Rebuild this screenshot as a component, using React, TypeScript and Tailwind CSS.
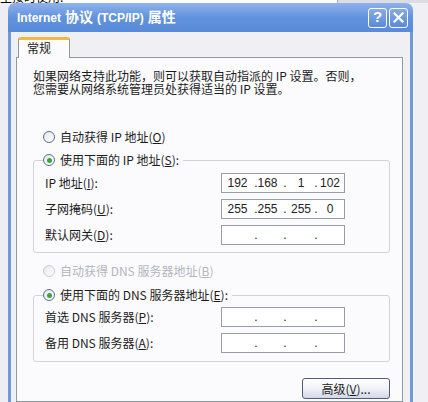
import React from "react";

const cjk = "font-['Noto_Sans_CJK_SC',sans-serif]";

function Radio({ checked = false, disabled = false }: { checked?: boolean; disabled?: boolean }) {
  return (
    <span
      className={`flex items-center justify-center w-[12px] h-[12px] rounded-full border bg-gradient-to-br from-[#e4e6ee] to-white ${
        disabled ? "border-[#c9ccd6]" : "border-[#5d6f8c]"
      }`}
    >
      {checked && <span className="w-[5px] h-[5px] rounded-full bg-[#3aa53a]" />}
    </span>
  );
}

function Key({ k }: { k: string }) {
  return (
    <>
      (<span className="underline underline-offset-1">{k}</span>)
    </>
  );
}

// IP 地址输入框：四段加三个点
function IpBox({ parts }: { parts?: string[] }) {
  const p = parts ?? ["", "", "", ""];
  return (
    <div className="w-[124px] h-[20px] border border-[#979eab] bg-white flex items-center font-['Liberation_Sans',sans-serif] text-[12px] text-[#222]">
      <span className="w-[31px] flex justify-center">{p[0]}</span>
      <span className="w-[6px] flex justify-center">.</span>
      <span className="w-[17px] flex justify-center">{p[1]}</span>
      <span className="w-[18px] flex justify-center">.</span>
      <span className="w-[14px] flex justify-center">{p[2]}</span>
      <span className="w-[16px] flex justify-center">.</span>
      <span className="w-[12px] flex justify-center">{p[3]}</span>
    </div>
  );
}

function Row({ label, parts }: { label: React.ReactNode; parts?: string[] }) {
  return (
    <div className="flex items-center h-[20px]">
      <span className="w-[176px]">{label}</span>
      <IpBox parts={parts} />
    </div>
  );
}

export default function App() {
  return (
    <div className={`w-[428px] h-[402px] overflow-hidden bg-[#eef0f4] flex flex-col ${cjk} text-[12px] text-[#1c1c1c]`}>
      {/* 后面窗口露出的一点 */}
      <div className="h-[3px] flex overflow-hidden">
        <div className="w-[337px] bg-white overflow-hidden">
          <div className="-mt-[10px] h-[13px] leading-[13px] text-black">生接时使用:</div>
        </div>
        <div className="w-[1px] bg-[#a8a8b0]" />
        <div className="flex-1 bg-[#dcdde3]" />
      </div>

      <div className="flex flex-1 min-h-0">
        <div className="w-[8px] bg-[#eceef3]" />

        <div className="w-[405px] flex flex-col rounded-t-[7px] overflow-hidden">
          {/* 标题栏 */}
          <div className="h-[29px] flex items-center pl-[9px] pr-[5px] bg-gradient-to-b from-[#8fb2ec] via-[#6192dd] to-[#5a8ad8]">
            <span className="flex items-center gap-[4px] font-['Liberation_Sans','Noto_Sans_CJK_SC',sans-serif] font-bold text-white text-[12px]">
              <span>Internet</span>
              <span className="text-[14px]">协议</span>
              <span>(TCP/IP)</span>
              <span className="text-[14px]">属性</span>
            </span>
            <div className="ml-auto flex gap-[2px]">
              <div className="w-[19px] h-[20px] rounded-[3px] border border-white bg-gradient-to-b from-[#86aae9] to-[#5b8ad9] flex items-center justify-center font-['Liberation_Sans',sans-serif] font-bold text-white text-[15px]">
                ?
              </div>
              <div className="w-[19px] h-[20px] rounded-[3px] border border-white bg-gradient-to-b from-[#86aae9] to-[#5b8ad9] flex items-center justify-center">
                <svg width="11" height="11" viewBox="0 0 11 11">
                  <path d="M1.5 1.5 L9.5 9.5 M9.5 1.5 L1.5 9.5" stroke="white" strokeWidth="2.2" strokeLinecap="square" />
                </svg>
              </div>
            </div>
          </div>

          {/* 对话框主体 */}
          <div className="flex-1 flex flex-col border-x-[3px] border-[#7099dc] bg-[#efeff4] pt-[5px] pl-[5px] pr-[7px]">
            <div className="relative z-10 -mb-[1px] ml-[2px] w-[52px] h-[21px] rounded-t-[3px] border-x border-t-[3px] border-x-[#919b9c] border-t-[#f0b849] bg-[#fbfbfd] pl-[8px] leading-[16px]">
              常规
            </div>

            <div className="flex-1 border border-[#919b9c] bg-[#fbfbfd] pl-[16px] pr-[12px] pt-[11px] flex flex-col">
              <div className="leading-[13px]">
                <div className="h-[13px]">如果网络支持此功能，则可以获取自动指派的 IP 设置。否则，</div>
                <div className="h-[13px]">您需要从网络系统管理员处获得适当的 IP 设置。</div>
              </div>

              <div className="mt-[34px] ml-[10px] flex items-center gap-[5px] h-[16px]">
                <Radio />
                <span>
                  自动获得 IP 地址<Key k="O" />
                </span>
              </div>

              <fieldset className="mt-[7px] border border-[#d2d3da] rounded-[3px] p-0 pb-[7px]">
                <legend className="ml-[9px] pr-[4px] flex items-center gap-[5px] h-[16px]">
                  <Radio checked />
                  <span>
                    使用下面的 IP 地址<Key k="S" />:
                  </span>
                </legend>
                <div className="pt-[5px] pl-[11px] flex flex-col gap-[6px]">
                  <Row label={<>IP 地址<Key k="I" />:</>} parts={["192", "168", "1", "102"]} />
                  <Row label={<>子网掩码<Key k="U" />:</>} parts={["255", "255", "255", "0"]} />
                  <Row label={<>默认网关<Key k="D" />:</>} />
                </div>
              </fieldset>

              <div className="mt-[10px] ml-[10px] flex items-center gap-[5px] h-[16px] text-[#b3b5bf]">
                <Radio disabled />
                <span>
                  自动获得 DNS 服务器地址<Key k="B" />
                </span>
              </div>

              <fieldset className="mt-[8px] border border-[#d2d3da] rounded-[3px] p-0 pb-[8px]">
                <legend className="ml-[9px] pr-[4px] flex items-center gap-[5px] h-[16px]">
                  <Radio checked />
                  <span>
                    使用下面的 DNS 服务器地址<Key k="E" />:
                  </span>
                </legend>
                <div className="pt-[4px] pl-[11px] flex flex-col gap-[6px]">
                  <Row label={<>首选 DNS 服务器<Key k="P" />:</>} />
                  <Row label={<>备用 DNS 服务器<Key k="A" />:</>} />
                </div>
              </fieldset>

              <div className="mt-[16px] flex justify-end">
                <button className="w-[88px] h-[21px] rounded-[3px] border border-[#4f5d78] bg-gradient-to-b from-white via-[#f1f2f7] to-[#d3d8e6] flex items-center justify-center text-[12px]">
                  高级<Key k="V" />...
                </button>
              </div>
            </div>
          </div>
        </div>

        <div className="flex-1 bg-[#f0f0f4]" />
      </div>
    </div>
  );
}
